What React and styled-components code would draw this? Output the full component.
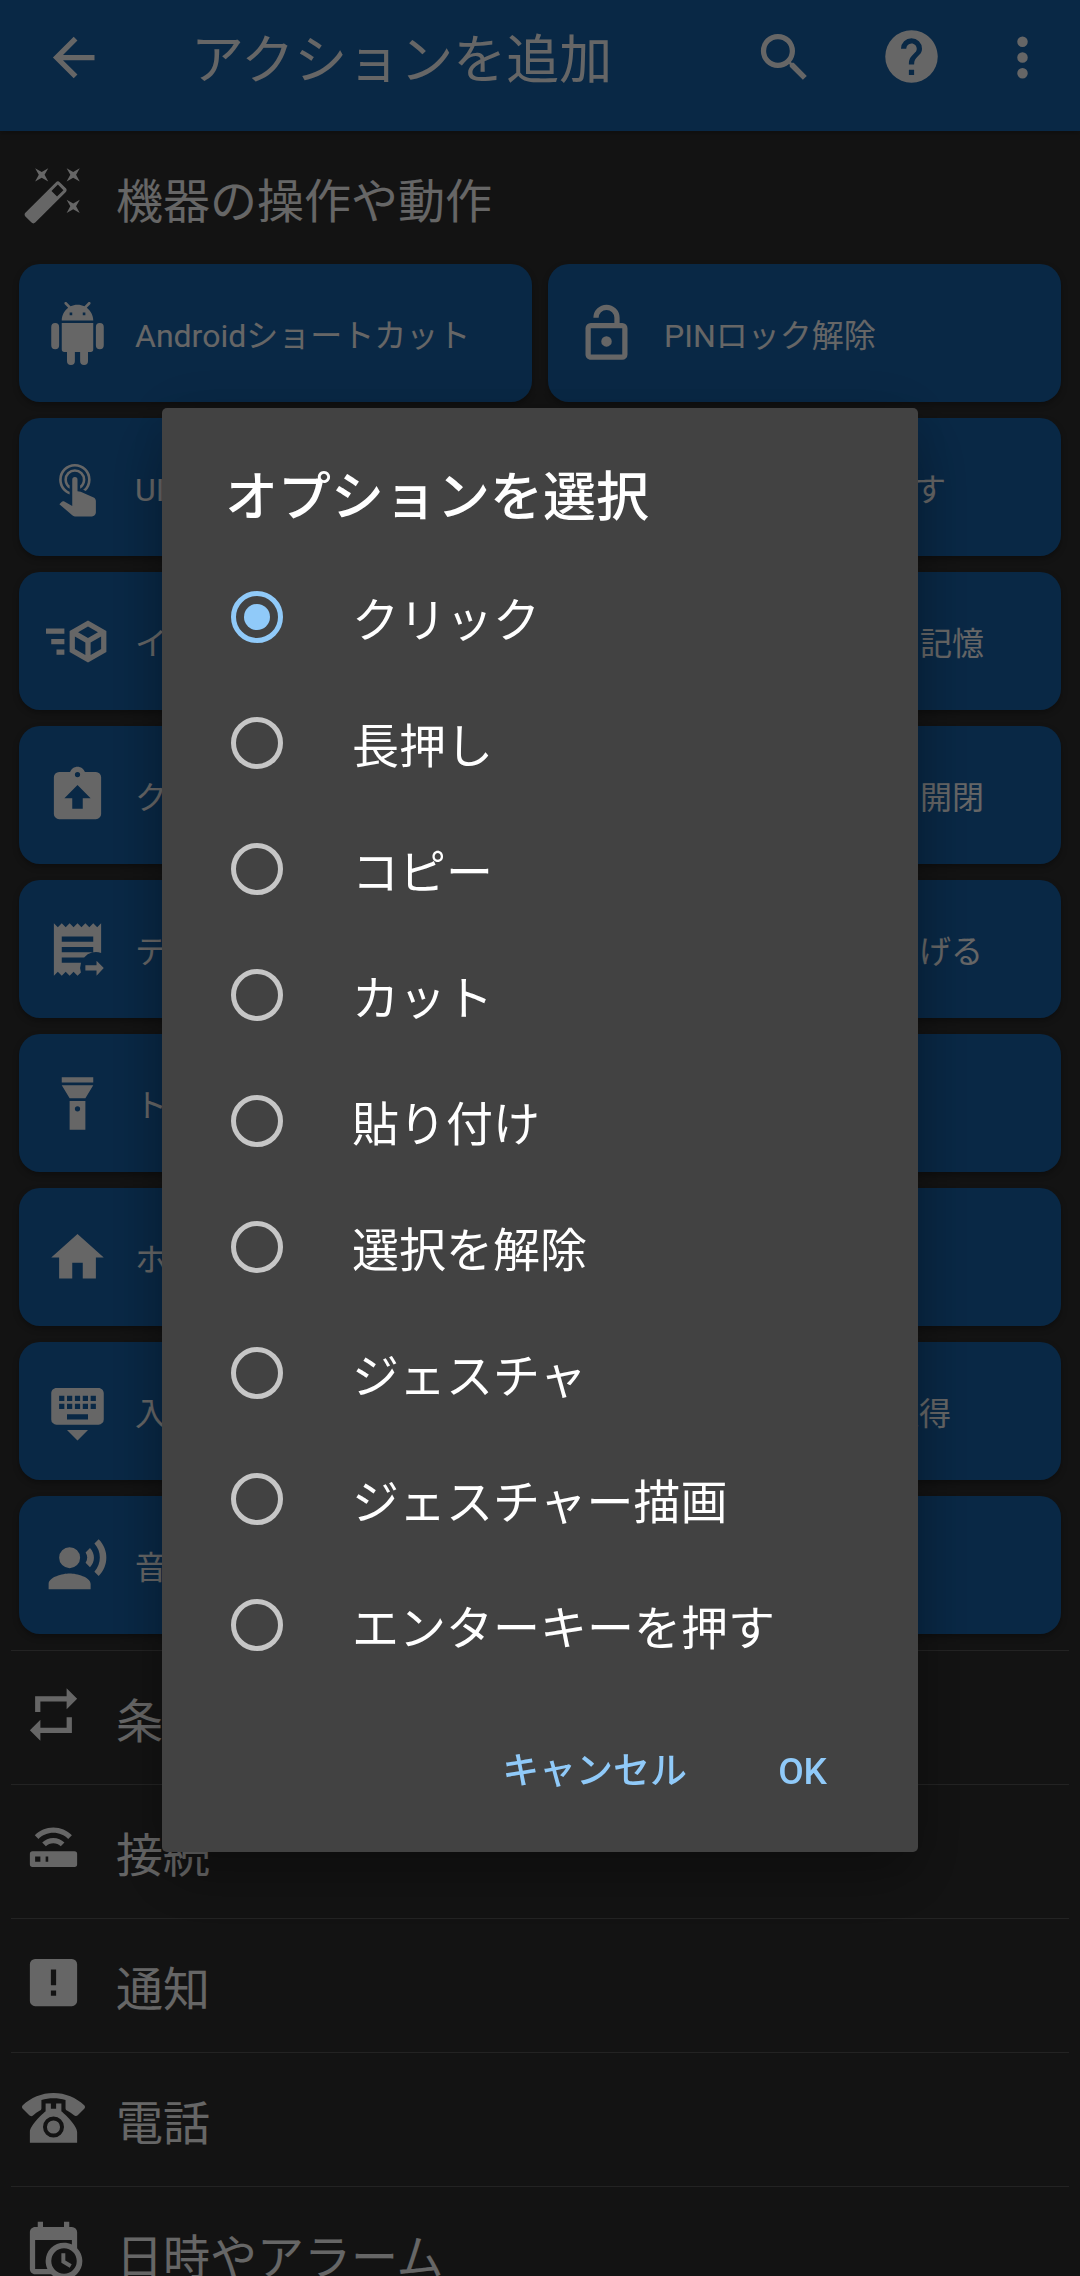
import React, { useState } from 'react'
import styled, { createGlobalStyle, css } from 'styled-components';

// Icon shapes, all on a 24x24 grid
const icons = {
    back: 'M20,11V13H8L13.5,18.5L12.08,19.92L4.16,12L12.08,4.08L13.5,5.5L8,11H20Z',
    search: 'M15.5,14H14.71L14.43,13.73C15.41,12.59 16,11.11 16,9.5A6.5,6.5 0 1,0 9.5,16C11.11,16 12.59,15.41 13.73,14.43L14,14.71V15.5L19,20.49L20.49,19L15.5,14M9.5,14A4.5,4.5 0 1,1 14,9.5A4.5,4.5 0 0,1 9.5,14Z',
    help: 'M15.07,11.25L14.17,12.17C13.45,12.89 13,13.5 13,15H11V14.5C11,13.39 11.45,12.39 12.17,11.67L13.41,10.41C13.78,10.05 14,9.55 14,9C14,7.89 13.1,7 12,7A2,2 0 0,0 10,9H8A4,4 0 0,1 12,5A4,4 0 0,1 16,9C16,9.88 15.64,10.67 15.07,11.25M13,19H11V17H13M12,2A10,10 0 0,0 2,12A10,10 0 0,0 12,22A10,10 0 0,0 22,12C22,6.47 17.5,2 12,2Z',
    more: 'M12,16A2,2 0 0,1 14,18A2,2 0 0,1 12,20A2,2 0 0,1 10,18A2,2 0 0,1 12,16M12,10A2,2 0 0,1 14,12A2,2 0 0,1 12,14A2,2 0 0,1 10,12A2,2 0 0,1 12,10M12,4A2,2 0 0,1 14,6A2,2 0 0,1 12,8A2,2 0 0,1 10,6A2,2 0 0,1 12,4Z',
    wand: 'M7.5,5.6L5,7L6.4,4.5L5,2L7.5,3.4L10,2L8.6,4.5L10,7L7.5,5.6M19.5,15.4L22,14L20.6,16.5L22,19L19.5,17.6L17,19L18.4,16.5L17,14L19.5,15.4M22,2L20.6,4.5L22,7L19.5,5.6L17,7L18.4,4.5L17,2L19.5,3.4L22,2M13.34,12.78L15.78,10.34L13.66,8.22L11.22,10.66L13.34,12.78M14.37,7.29L16.71,9.63C17.1,10 17.1,10.65 16.71,11.04L5.04,22.71C4.65,23.1 4,23.1 3.63,22.71L1.29,20.37C0.9,20 0.9,19.35 1.29,18.96L12.96,7.29C13.35,6.9 14,6.9 14.37,7.29Z',
    android: 'M15,5H14V4H15M10,5H9V4H10M15.53,2.16L16.84,0.85C17.03,0.66 17.03,0.34 16.84,0.14C16.64,-0.05 16.32,-0.05 16.13,0.14L14.65,1.62C13.85,1.23 12.95,1 12,1C11.04,1 10.14,1.23 9.34,1.63L7.85,0.14C7.66,-0.05 7.34,-0.05 7.15,0.14C6.95,0.34 6.95,0.66 7.15,0.85L8.46,2.16C6.97,3.26 6,5 6,7H18C18,5 17,3.25 15.53,2.16M20.5,8A1.5,1.5 0 0,0 19,9.5V16.5A1.5,1.5 0 0,0 20.5,18A1.5,1.5 0 0,0 22,16.5V9.5A1.5,1.5 0 0,0 20.5,8M3.5,8A1.5,1.5 0 0,0 2,9.5V16.5A1.5,1.5 0 0,0 3.5,18A1.5,1.5 0 0,0 5,16.5V9.5A1.5,1.5 0 0,0 3.5,8M6,18A1,1 0 0,0 7,19H8V22.5A1.5,1.5 0 0,0 9.5,24A1.5,1.5 0 0,0 11,22.5V19H13V22.5A1.5,1.5 0 0,0 14.5,24A1.5,1.5 0 0,0 16,22.5V19H17A1,1 0 0,0 18,18V8H6V18Z',
    unlock: 'M18,20V10H6V20H18M18,8A2,2 0 0,1 20,10V20A2,2 0 0,1 18,22H6C4.89,22 4,21.1 4,20V10A2,2 0 0,1 6,8H15V6A3,3 0 0,0 12,3A3,3 0 0,0 9,6H7A5,5 0 0,1 12,1A5,5 0 0,1 17,6V8H18M12,17A2,2 0 1,1 12,13A2,2 0 0,1 12,17Z',
    tap: 'M10,9A1,1 0 0,1 11,8A1,1 0 0,1 12,9V13.47L13.21,13.6L18.15,15.79C18.68,16.03 19,16.56 19,17.14V21.5C18.97,22.32 18.32,22.97 17.5,23H11C10.62,23 10.26,22.85 10,22.57L5.1,18.37L5.84,17.6C6.03,17.39 6.3,17.28 6.58,17.28H6.8L10,19V9M11,5A4,4 0 0,1 15,9C15,10.5 14.2,11.77 13,12.46V11.24C13.61,10.69 14,9.89 14,9A3,3 0 0,0 11,6A3,3 0 0,0 8,9C8,9.89 8.39,10.69 9,11.24V12.46C7.8,11.77 7,10.5 7,9A4,4 0 0,1 11,5M11,3A6,6 0 0,1 17,9C17,10.7 16.29,12.23 15.16,13.33L14.16,12.88C15.28,11.96 16,10.56 16,9A5,5 0 0,0 11,4A5,5 0 0,0 6,9C6,11.05 7.23,12.81 9,13.58V14.66C6.67,13.83 5,11.61 5,9A6,6 0 0,1 11,3Z',
    cubeSend: 'M16,4L9,8.04V15.96L16,20L23,15.96V8.04M16,6.31L19.8,8.5L16,10.69L12.21,8.5M0,7V9H7V7M11,10.11L15,12.42V17.11L11,14.81M21,10.11V14.81L17,17.11V12.42M2,11V13H7V11M4,15V17H7V15',
    clipboard: 'M19,3H14.82C14.4,1.84 13.3,1 12,1C10.7,1 9.6,1.84 9.18,3H5A2,2 0 0,0 3,5V19A2,2 0 0,0 5,21H19A2,2 0 0,0 21,19V5A2,2 0 0,0 19,3M12,3A1,1 0 0,1 13,4A1,1 0 0,1 12,5A1,1 0 0,1 11,4A1,1 0 0,1 12,3M14,13V17H10V13H7L12,8L17,13H14Z',
    receipt: 'M3,22L4.5,20.5L6,22L7.5,20.5L9,22L10.5,20.5L12,22L13.3,20.8A6,6 0 0,1 13.34,17A6,6 0 0,1 14.53,15A6,6 0 0,1 21,13.34V2L19.5,3.5L18,2L16.5,3.5L15,2L13.5,3.5L12,2L10.5,3.5L9,2L7.5,3.5L6,2L4.5,3.5L3,2V22M18,9H6V7H18V9M18,13H6V11H18V13M6,17V15H14.53A6,6 0 0,0 13.34,17H6M15,18V20H19.25V22L22,19L19.25,16.25V18H15Z',
    flashlight: 'M9,10L6,5H18L15,10H9M18,4H6V2H18V4M9,22V11H15V22H9M12,13A1,1 0 0,0 11,14A1,1 0 0,0 12,15A1,1 0 0,0 13,14A1,1 0 0,0 12,13Z',
    home: 'M10,20V14H14V20H19V12H22L12,3L2,12H5V20H10Z',
    keyboard: 'M19,8H17V6H19M19,11H17V9H19M16,8H14V6H16M16,11H14V9H16M16,15H8V13H16M7,8H5V6H7M7,11H5V9H7M8,9H10V11H8M8,6H10V8H8M11,9H13V11H11M11,6H13V8H11M20,3H4C2.89,3 2,3.9 2,5V15A2,2 0 0,0 4,17H20A2,2 0 0,0 22,15V5C22,3.9 21.1,3 20,3M12,23L16,19H8L12,23Z',
    voice: 'M9,5A4,4 0 0,1 13,9A4,4 0 0,1 9,13A4,4 0 0,1 5,9A4,4 0 0,1 9,5M9,15C11.67,15 17,16.34 17,19V21H1V19C1,16.34 6.33,15 9,15M16.76,5.36C18.78,7.56 18.78,10.61 16.76,12.63L15.08,10.94C15.92,9.76 15.92,8.23 15.08,7.05L16.76,5.36M20.07,2C24,6.05 23.97,12.11 20.07,16L18.44,14.37C21.21,11.19 21.21,6.65 18.44,3.63L20.07,2Z',
    repeat: 'M17,17H7V14L3,18L7,22V19H19V13H17M7,7H17V10L21,6L17,2V5H5V11H7V7Z',
    router: 'M4,13H20A1,1 0 0,1 21,14V18A1,1 0 0,1 20,19H4A1,1 0 0,1 3,18V14A1,1 0 0,1 4,13M9,17H10V15H9V17M5,15V17H7V15H5M19,6.93L17.6,8.34C16.15,6.89 14.15,6 11.93,6C9.72,6 7.72,6.89 6.27,8.34L4.87,6.93C6.68,5.12 9.18,4 11.93,4C14.69,4 17.19,5.12 19,6.93M16.17,9.76L14.77,11.17C14.04,10.45 13.04,10 11.93,10C10.82,10 9.82,10.45 9.1,11.17L7.7,9.76C8.78,8.67 10.28,8 11.93,8C13.58,8 15.08,8.67 16.17,9.76Z',
    alert: 'M5,3H19A2,2 0 0,1 21,5V19A2,2 0 0,1 19,21H5A2,2 0 0,1 3,19V5A2,2 0 0,1 5,3M13,13V7H11V13H13M13,17V15H11V17H13Z',
    phone: 'M12,3C7.46,3 3.34,4.78 0.29,7.67C0.11,7.85 0,8.1 0,8.38C0,8.66 0.11,8.91 0.29,9.09L2.77,11.57C2.95,11.75 3.2,11.86 3.5,11.86C3.75,11.86 4,11.75 4.18,11.58C4.97,10.84 5.87,10.22 6.84,9.73C7.17,9.57 7.4,9.23 7.4,8.83V5.73C8.85,5.25 10.39,5 12,5C13.59,5 15.14,5.25 16.59,5.72V8.82C16.59,9.21 16.82,9.56 17.15,9.72C18.13,10.21 19,10.84 19.82,11.57C20,11.75 20.25,11.85 20.5,11.85C20.8,11.85 21.05,11.74 21.23,11.56L23.71,9.08C23.89,8.9 24,8.65 24,8.37C24,8.09 23.88,7.85 23.7,7.67C20.65,4.78 16.53,3 12,3M9,7V10C9,10 3,15 3,18V22H21V18C21,15 15,10 15,10V7H13V9H11V7H9M12,12A4,4 0 0,1 16,16A4,4 0 0,1 12,20A4,4 0 0,1 8,16A4,4 0 0,1 12,12M12,13.5A2.5,2.5 0 0,0 9.5,16A2.5,2.5 0 0,0 12,18.5A2.5,2.5 0 0,0 14.5,16A2.5,2.5 0 0,0 12,13.5Z',
    calendar: 'M15,13H16.5V15.82L18.94,17.23L18.19,18.53L15,16.69V13M19,8H5V19H9.67C9.24,18.09 9,17.07 9,16A7,7 0 0,1 16,9C17.07,9 18.09,9.24 19,9.67V8M5,21C3.89,21 3,20.1 3,19V5C3,3.89 3.89,3 5,3H6V1H8V3H16V1H18V3H19A2,2 0 0,1 21,5V11.1C22.24,12.36 23,14.09 23,16A7,7 0 0,1 16,23C14.09,23 12.36,22.24 11.1,21H5M16,11.15A4.85,4.85 0 0,0 11.15,16C11.15,18.68 13.32,20.85 16,20.85A4.85,4.85 0 0,0 20.85,16C20.85,13.32 18.68,11.15 16,11.15Z',
};

const actions = [
    { icon: 'android', label: 'Androidショートカット' },
    { icon: 'unlock', label: 'PINロック解除' },
    { icon: 'tap', label: 'UI操作' },
    { icon: 'back', label: 'Powerボタンを押す' },
    { icon: 'cubeSend', label: 'インテント送信' },
    { icon: 'clipboard', label: 'クリップボードを記憶' },
    { icon: 'clipboard', label: 'クリップボード' },
    { icon: 'more', label: 'ステータスバーの開閉' },
    { icon: 'receipt', label: 'テキスト操作' },
    { icon: 'voice', label: 'テキストを読み上げる' },
    { icon: 'flashlight', label: 'トーチのオン/オフ' },
    { icon: 'alert', label: 'バイブ' },
    { icon: 'home', label: 'ホーム画面起動' },
    { icon: 'search', label: '音声検索' },
    { icon: 'keyboard', label: '入力キーボード' },
    { icon: 'receipt', label: '画面テキストの取得' },
    { icon: 'voice', label: '音声入力' },
    { icon: 'repeat', label: '再起動' },
];

const sections = [
    { icon: 'repeat', label: '条件' },
    { icon: 'router', label: '接続' },
    { icon: 'alert', label: '通知' },
    { icon: 'phone', label: '電話' },
    { icon: 'calendar', label: '日時やアラーム' },
];

const options = [
    'クリック',
    '長押し',
    'コピー',
    'カット',
    '貼り付け',
    '選択を解除',
    'ジェスチャ',
    'ジェスチャー描画',
    'エンターキーを押す',
];

const Icon = ({ name }) => (
    <IconSvg viewBox='0 0 24 24' aria-hidden='true'>
        <path fillRule='evenodd' d={icons[name]} />
    </IconSvg>
);

const OptionDialog = () => {
    const [selected, setSelected] = useState(0);

    return (
        <Dialog role='dialog'>
            <DialogTitle>オプションを選択</DialogTitle>
            <OptionList role='radiogroup'>
                {options.map((option, index) => (
                    <Option key={option} role='radio' aria-checked={index === selected} onClick={() => setSelected(index)}>
                        <Radio $checked={index === selected} />
                        <OptionLabel>{option}</OptionLabel>
                    </Option>
                ))}
            </OptionList>
            <DialogActions>
                <DialogButton>キャンセル</DialogButton>
                <DialogButton>OK</DialogButton>
            </DialogActions>
        </Dialog>
    );
};

const App = () => (
    <>
        <GlobalStyle />
        <Screen>
            <AppBar>
                <Icon name='back' />
                <AppTitle>アクションを追加</AppTitle>
                <Icon name='search' />
                <Icon name='help' />
                <Icon name='more' />
            </AppBar>
            <Section $first>
                <Icon name='wand' />
                <SectionLabel>機器の操作や動作</SectionLabel>
            </Section>
            <ActionGrid>
                {actions.map(({ icon, label }) => (
                    <ActionCard key={label}>
                        <Icon name={icon} />
                        <ActionLabel>{label}</ActionLabel>
                    </ActionCard>
                ))}
            </ActionGrid>
            {sections.map(({ icon, label }) => (
                <Section key={label}>
                    <Icon name={icon} />
                    <SectionLabel>{label}</SectionLabel>
                </Section>
            ))}
        </Screen>
        <Backdrop>
            <OptionDialog />
        </Backdrop>
    </>
);

export default App;

const GlobalStyle = createGlobalStyle`
    * {
        box-sizing: border-box;
    }
    body {
        margin: 0;
        background: #303030;
        font-family: Roboto, 'Noto Sans CJK JP', sans-serif;
        overflow: hidden;
    }
`;

const IconSvg = styled.svg`
    display: block;
    flex: none;
    width: 63px;
    height: 63px;
    fill: currentColor;
`;

const Screen = styled.div`
    height: 2276px;
    overflow: hidden;
    color: #fff;
`;

const AppBar = styled.header`
    display: flex;
    align-items: flex-start;
    height: 131px;
    padding: 26px 26px 0 42px;
    background: #1764ad;
    box-shadow: 0 2px 6px rgba(0, 0, 0, 0.3);

    ${IconSvg}:nth-of-type(3) {
        margin: -1px 48px 0 64px;
    }
`;

const AppTitle = styled.h1`
    flex: 1;
    margin: 0 0 0 86px;
    padding-top: 4px;
    font-size: 53px;
    font-weight: 400;
    line-height: 63px;
    white-space: nowrap;
`;

const Section = styled.div`
    display: flex;
    align-items: flex-start;
    gap: 31px;
    height: 134px;
    margin: 0 11px;
    padding: 32px 0 0 11px;
    border-top: 1px solid #585858;
    ${({ $first }) => $first && css`
        height: 133px;
        border-top: none;
    `}
`;

const SectionLabel = styled.span`
    padding-top: 7px;
    font-size: 47px;
    line-height: 63px;
    white-space: nowrap;
`;

const ActionGrid = styled.div`
    display: grid;
    grid-template-columns: 1fr 1fr;
    grid-auto-rows: 138px;
    gap: 16px;
    padding: 0 19px 16px;
`;

const ActionCard = styled.div`
    display: flex;
    align-items: center;
    gap: 26px;
    min-width: 0;
    padding-left: 27px;
    border-radius: 21px;
    background: #1764ad;
    box-shadow: 0 3px 6px rgba(0, 0, 0, 0.3);
`;

const ActionLabel = styled.span`
    padding-top: 6px;
    font-size: 32px;
    line-height: 42px;
    white-space: nowrap;
`;

const Backdrop = styled.div`
    position: fixed;
    inset: 0;
    display: flex;
    justify-content: center;
    align-items: flex-start;
    padding-top: 408px;
    background: rgba(0, 0, 0, 0.6);
`;

const Dialog = styled.div`
    display: flex;
    flex-direction: column;
    width: 756px;
    height: 1444px;
    border-radius: 5px;
    background: #424242;
    color: #fff;
    box-shadow: 0 30px 60px rgba(0, 0, 0, 0.25), 0 0 60px rgba(0, 0, 0, 0.12);
`;

const DialogTitle = styled.h2`
    height: 146px;
    margin: 0;
    padding: 51px 0 0 63px;
    font-size: 53px;
    font-weight: 500;
    line-height: 78px;
`;

const OptionList = styled.div`
    display: flex;
    flex-direction: column;
`;

const Option = styled.div`
    display: flex;
    align-items: center;
    gap: 69px;
    height: 126px;
    padding-left: 69px;
`;

const Radio = styled.span`
    display: grid;
    place-items: center;
    width: 52px;
    height: 52px;
    border: 5px solid ${({ $checked }) => $checked ? '#90caf9' : '#c6c6c6'};
    border-radius: 50%;

    &::after {
        content: '';
        width: 26px;
        height: 26px;
        border-radius: 50%;
        background: ${({ $checked }) => $checked ? '#90caf9' : 'transparent'};
    }
`;

const OptionLabel = styled.span`
    padding-top: 8px;
    font-size: 47px;
    line-height: 60px;
`;

const DialogActions = styled.div`
    display: flex;
    justify-content: flex-end;
    gap: 91px;
    padding: 60px 91px 0 0;
`;

const DialogButton = styled.button`
    padding: 0;
    border: none;
    background: none;
    color: #90caf9;
    font-family: inherit;
    font-size: 37px;
    font-weight: 500;
    line-height: 48px;
`;
